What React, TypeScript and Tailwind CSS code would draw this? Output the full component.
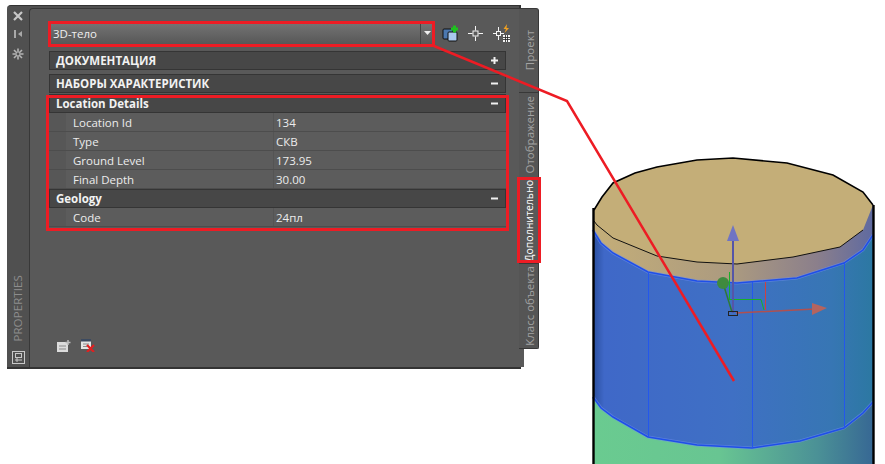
const rows1 = [
  ["Location Id", "134"],
  ["Type", "СКВ"],
  ["Ground Level", "173.95"],
  ["Final Depth", "30.00"],
];

const tabs = [
  { label: "Проект", h: "h-[85px] rounded-tr-[3px] border-t", size: "text-[11.5px]", active: false },
  { label: "Отображение", h: "h-[85px]", size: "text-[11.5px]", active: false },
  { label: "Дополнительно", h: "h-[86px]", size: "text-[10.5px]", active: true },
  { label: "Класс объекта", h: "h-[85px] rounded-br-[2px]", size: "text-[11.5px]", active: false },
];

const Sign = ({ plus }: { plus?: boolean }) => (
  <svg width="9" height="9" viewBox="0 0 9 9" className="shrink-0">
    <rect x="1" y="3.5" width="7" height="2" fill="#f0f0f0" />
    {plus && <rect x="3.5" y="1" width="2" height="7" fill="#f0f0f0" />}
  </svg>
);

const Header = ({ title, plus }: { title: string; plus?: boolean }) => (
  <div className="flex h-[19px] items-center justify-between border border-[#353535] bg-[#474747] px-[6px]">
    <span className="pt-px text-[11.5px] font-bold text-[#f2f2f2]">{title}</span>
    <Sign plus={plus} />
  </div>
);

const Row = ({ label, value }: { label: string; value: string }) => (
  <div className="flex h-[19px] items-center border-b border-[#4d4d4d] bg-[#5c5c5c] text-[11.5px] text-[#ececec]">
    <div className="h-full w-[17px] shrink-0 bg-[#575757]" />
    <div className="flex h-full w-[207px] shrink-0 items-center pl-[7px] pt-px">{label}</div>
    <div className="flex h-full items-center border-l border-[#545454] pl-[2px] pt-px">{value}</div>
  </div>
);

const topArc = "M594 210 L602 197 L613 183 L635 173 L657 167 L697 160 L733 158 L787 163 L833 175 L863 192 L873 205";
const discArc = "L863 230 L840 247 L793 257 L737 264 L697 262 L657 256 L613 238 L597 225 Z";
const edgeTop = "M593 230 L601 243 L613 253 L648 272 L697 281 L737 283 L797 278 L844 263 L863 250 L873 235";
const edgeBottom = "M593 397 L601 408 L613 417 L648 437 L697 445 L752 448 L800 441 L844 428 L863 413 L873 402";

const Cylinder = () => (
  <svg width="300" height="320" viewBox="580 150 300 320" className="absolute left-[580px] top-[150px]">
    <defs>
      <linearGradient id="bodyBlue" x1="0" x2="1" y1="0" y2="0">
        <stop offset="0" stopColor="#2a4f9e" />
        <stop offset="0.04" stopColor="#3f68c8" />
        <stop offset="0.5" stopColor="#3f70c4" />
        <stop offset="0.85" stopColor="#3776b4" />
        <stop offset="1" stopColor="#2c78a2" />
      </linearGradient>
      <linearGradient id="bodyGreen" x1="0" x2="1" y1="0" y2="0">
        <stop offset="0" stopColor="#6acb90" />
        <stop offset="0.45" stopColor="#68c592" />
        <stop offset="0.8" stopColor="#4b9196" />
        <stop offset="1" stopColor="#376894" />
      </linearGradient>
      <linearGradient id="band" x1="0" x2="1" y1="0" y2="0">
        <stop offset="0" stopColor="#c4ae78" />
        <stop offset="0.5" stopColor="#ab9a80" />
        <stop offset="0.8" stopColor="#8b7f8b" />
        <stop offset="1" stopColor="#5f6aa0" />
      </linearGradient>
    </defs>
    <rect x="594" y="390" width="279" height="80" fill="url(#bodyGreen)" />
    <path d={`${edgeTop} L873 402 L863 413 L844 428 L800 441 L752 448 L697 445 L648 437 L613 417 L601 408 L593 397 Z`} fill="url(#bodyBlue)" />
    <path d={`M594 210 L612 186 L733 158 L873 205 L873 235 L863 250 L844 263 L797 278 L737 283 L697 281 L648 272 L613 253 L601 243 L593 230 Z`} fill="url(#band)" />
    <path d={`${topArc} ${discArc}`} fill="#c4ae78" />
    <path d={topArc} fill="none" stroke="#000" strokeWidth="1.6" />
    <path d="M594 221 L597 225 L613 238 L657 256 L697 262 L737 264 L793 257 L840 247 L863 230" fill="none" stroke="#111" />
    <path d={edgeTop} fill="none" stroke="#6f90ee" strokeWidth="3" opacity="0.55" />
    <path d={edgeBottom} fill="none" stroke="#6f90ee" strokeWidth="3" opacity="0.55" />
    <path d={edgeTop} fill="none" stroke="#1f4fe8" strokeWidth="1.5" />
    <path d={edgeBottom} fill="none" stroke="#1f4fe8" strokeWidth="1.5" />
    <path d="M648.5 272 V437 M752.5 282 V448 M844.5 263 V428" stroke="#2457ec" strokeWidth="1" />
    <path d="M593.5 208 V470 M873.5 205 V470" stroke="#000" strokeWidth="2.4" />
    <path d="M729.5 272 V300 M729.5 299.5 H761 L764 310" stroke="#18b028" fill="none" />
    <path d="M765.5 282 V310" stroke="#d04040" />
    <path d="M733 240 V313" stroke="#5555a8" strokeWidth="2" />
    <path d="M733 225 L727 241 H739 Z" fill="#6f74c4" />
    <path d="M723 283 L732 312" stroke="#2e7a36" strokeWidth="1.5" />
    <circle cx="723" cy="283" r="6" fill="#3f8a3f" />
    <path d="M736 313 L815 309" stroke="#b05050" strokeWidth="1.5" />
    <path d="M812 303 L827 308 L812 315 Z" fill="#b4645f" />
    <rect x="728.5" y="311.5" width="9" height="4" fill="none" stroke="#222" />
  </svg>
);

const App = () => {
  return (
    <div className="relative h-[464px] w-[885px] overflow-hidden bg-white font-['Open_Sans',sans-serif]">
      <div className="absolute left-[7px] top-[5px] flex">
        <div className="flex h-[364px] w-[514px] rounded-tl-[4px] border-b-2 border-r-2 border-t border-[#333333] bg-[#505050]">
          {/* left strip */}
          <div className="flex w-[22px] shrink-0 flex-col items-center pt-[5px]">
            <svg width="10" height="10" viewBox="0 0 10 10">
              <path d="M1 1 L9 9 M9 1 L1 9" stroke="#c8c8c8" strokeWidth="2.2" />
            </svg>
            <svg width="10" height="10" viewBox="0 0 10 10" className="mt-[8px]">
              <rect x="1" y="1" width="2" height="8" fill="#a8a8a8" />
              <path d="M9 2 L5 5 L9 8 Z" fill="#a8a8a8" />
            </svg>
            <svg width="12" height="12" viewBox="0 0 12 12" className="mt-[9px]">
              <path d="M2 2 L10 10 M10 2 L2 10 M6 0.5 V11.5 M0.5 6 H11.5" stroke="#b4b4b4" strokeWidth="1.6" />
              <circle cx="6" cy="6" r="1.4" fill="#505050" />
            </svg>
            <span className="mt-auto rotate-180 text-[11.5px] tracking-[0.1px] text-[#8d8d8d] [writing-mode:vertical-rl]">
              PROPERTIES
            </span>
            <svg width="13" height="13" viewBox="0 0 13 13" className="mb-[3px] mt-[9px]">
              <rect x="0.5" y="0.5" width="12" height="12" fill="none" stroke="#c8c8c8" />
              <rect x="3.5" y="2.5" width="6" height="4" fill="none" stroke="#c8c8c8" />
              <path d="M3 9 H10 M5 7 V11" stroke="#c8c8c8" />
            </svg>
          </div>
          {/* main panel */}
          <div className="mt-[2px] flex flex-1 flex-col rounded-tl-[4px] border-l border-t border-[#383838] bg-[#595959] pl-[19px] pr-[13px] pt-[12px]">
            <div className="flex items-center">
              <div className="flex h-[24px] w-[385px] items-center bg-gradient-to-b from-[#777777] to-[#565656] pl-[4px] text-[11.5px] text-[#efefef]">
                <span className="flex-1 pt-px">3D-тело</span>
                <div className="flex h-full w-[14px] items-center justify-center border-l border-[#454545]">
                  <svg width="7" height="5" viewBox="0 0 7 5">
                    <path d="M0 0 H7 L3.5 4 Z" fill="#efefef" />
                  </svg>
                </div>
              </div>
              <svg width="18" height="17" viewBox="0 0 18 17" className="ml-[8px]">
                <rect x="1" y="4" width="10" height="10" rx="1" fill="#4b78b0" stroke="#111" />
                <rect x="6" y="7" width="9" height="9" rx="1" fill="#a9c8ee" stroke="#111" />
                <path d="M9 4 H16 M12.5 0.5 V7.5" stroke="#1fc21f" strokeWidth="3" />
              </svg>
              <svg width="15" height="15" viewBox="0 0 15 15" className="ml-[8px]">
                <path d="M7.5 0 V4.5 M7.5 10.5 V15 M0 7.5 H4.5 M10.5 7.5 H15" stroke="#f4f4f4" />
                <rect x="5" y="5" width="5" height="5" fill="none" stroke="#f4f4f4" />
              </svg>
              <svg width="19" height="19" viewBox="0 0 19 19" className="ml-[9px]">
                <path d="M6.5 3 V7 M6.5 12 V16 M1 9.5 H4.5 M9 9.5 H12" stroke="#f4f4f4" />
                <rect x="4.5" y="7.5" width="4" height="4" fill="none" stroke="#f4f4f4" />
                <path d="M15 0 L11.5 5 H14 L12.5 9 L17 4 H14.5 Z" fill="#f0a020" />
                <rect x="11" y="11" width="7" height="7" fill="#f4f4f4" />
                <path d="M11 13.5 H18 M11 15.5 H18 M13.5 11 V18 M15.5 11 V18" stroke="#222" strokeWidth="0.8" />
              </svg>
            </div>
            <div className="mt-[6px] flex w-[457px] flex-col">
              <Header title="ДОКУМЕНТАЦИЯ" plus />
              <div className="h-[4px]" />
              <Header title="НАБОРЫ ХАРАКТЕРИСТИК" />
              <div className="h-px" />
              <Header title="Location Details" />
              {rows1.map((r) => (
                <Row key={r[0]} label={r[0]} value={r[1]} />
              ))}
              <Header title="Geology" />
              <Row label="Code" value="24пл" />
            </div>
            <div className="mb-[15px] mt-auto flex items-center gap-[10px] pl-[8px]">
              <svg width="14" height="12" viewBox="0 0 14 12">
                <rect x="0" y="2" width="11" height="10" fill="#dcdcdc" />
                <path d="M2 6 H9 M2 9 H9" stroke="#8a8a8a" />
                <path d="M11 0 V5 M8.5 2.5 H13.5" stroke="#bdbdbd" strokeWidth="1.5" />
              </svg>
              <svg width="14" height="13" viewBox="0 0 14 13">
                <rect x="0" y="0" width="10" height="10" fill="#e4e4e4" />
                <rect x="0" y="0" width="10" height="2.5" fill="#3c4a60" />
                <path d="M2 5 H8 M2 7.5 H6" stroke="#8a8a8a" />
                <path d="M6 6 L13 13 M13 6 L6 13" stroke="#e02020" strokeWidth="2.2" />
              </svg>
            </div>
          </div>
        </div>
        {/* side tabs */}
        <div className="-ml-[2px] mt-[3px] flex w-[20px] flex-col">
          {tabs.map((t) => (
            <div
              key={t.label}
              className={`flex ${t.h} items-center justify-center overflow-hidden border-b border-r border-[#383838] pl-[2px] ${
                t.active ? "bg-[#595959] text-white" : "bg-[#555555] text-[#a2a2a2]"
              }`}
            >
              <span className={`rotate-180 whitespace-nowrap ${t.size} [writing-mode:vertical-rl]`}>{t.label}</span>
            </div>
          ))}
        </div>
      </div>

      <Cylinder />

      {/* red callouts */}
      <div className="absolute left-[48px] top-[21px] h-[26px] w-[387px] border-[3px] border-[#ed1c24]" />
      <div className="absolute left-[46px] top-[95px] h-[136px] w-[463px] border-[3px] border-[#ed1c24]" />
      <div className="absolute left-[517px] top-[177px] h-[86px] w-[24px] border-[3px] border-[#ed1c24]" />
      <svg width="885" height="464" className="absolute left-0 top-0">
        <path d="M434 46 L567 101 L734 381" fill="none" stroke="#ed1c24" strokeWidth="2.5" />
      </svg>
    </div>
  );
};

export default App;
